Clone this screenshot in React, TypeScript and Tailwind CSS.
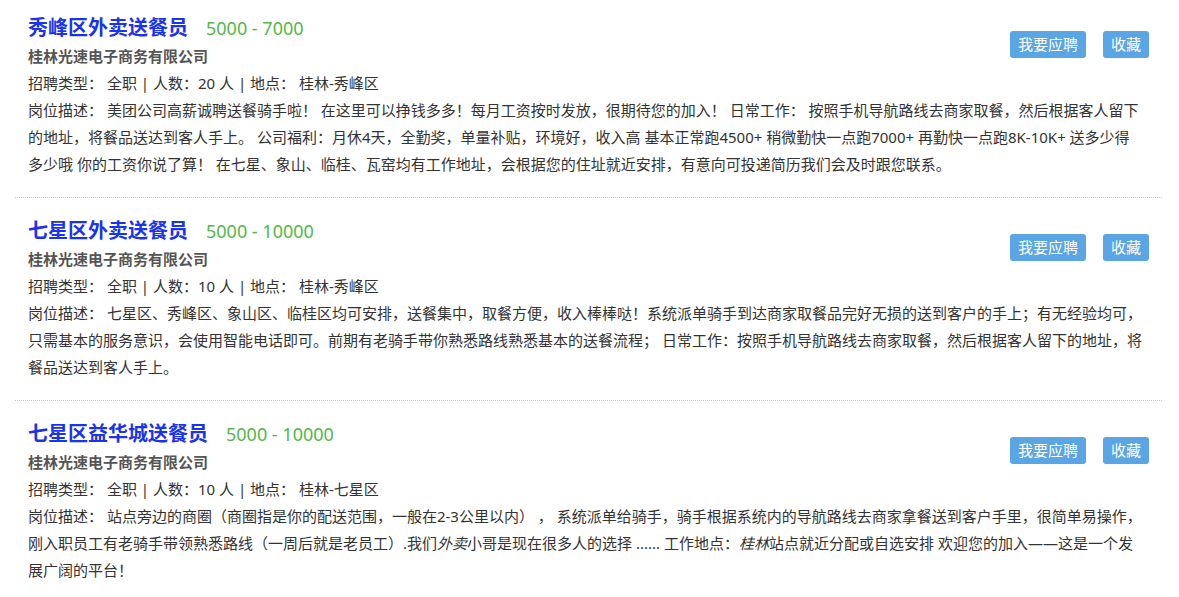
import React from "react";

const jobs = [
  {
    title: "秀峰区外卖送餐员",
    salary: "5000 - 7000",
    company: "桂林光速电子商务有限公司",
    count: "20",
    place: "桂林-秀峰区",
    desc: (
      <>
        美团公司高薪诚聘送餐骑手啦！ 在这里可以挣钱多多！每月工资按时发放，很期待您的加入！ 日常工作： 按照手机导航路线去商家取餐，然后根据客人留下的地址，将餐品送达到客人手上。 公司福利：月休4天，全勤奖，单量补贴，环境好，收入高 基本正常跑4500+ 稍微勤快一点跑7000+ 再勤快一点跑8K-10K+ 送多少得<span className="whitespace-nowrap">多少哦</span> 你的工资你说了算！ 在七星、象山、临桂、瓦窑均有工作地址，会根据您的住址就近安排，有意向可投递简历我们会及时跟您联系。
      </>
    ),
  },
  {
    title: "七星区外卖送餐员",
    salary: "5000 - 10000",
    company: "桂林光速电子商务有限公司",
    count: "10",
    place: "桂林-秀峰区",
    desc: (
      <>
        七星区、秀峰区、象山区、临桂区均可安排，送餐集中，取餐方便，收入棒棒哒！系统派单骑手到达商家取餐品完好无损的送到客户的手上；有无经验均可，只需基本的服务意识，会使用智能电话即可。前期有老骑手带你熟悉路线熟悉基本的送餐流程； 日常工作：按照手机导航路线去商家取餐，然后根据客人留下的地址，将餐品送达到客人手上。
      </>
    ),
  },
  {
    title: "七星区益华城送餐员",
    salary: "5000 - 10000",
    company: "桂林光速电子商务有限公司",
    count: "10",
    place: "桂林-七星区",
    desc: (
      <>
        站点旁边的商圈（商圈指是你的配送范围，一般在2-3公里以内） ， 系统派单给骑手，骑手根据系统内的导航路线去商家拿餐送到客户手里，很简单易操作，刚入职员工有老骑手带领熟悉路线（一周后就是老员工）.我们<i>外卖</i>小哥是现在很多人的选择 ...... 工作地点：<i>桂林</i>站点就近分配或自选安排 欢迎您的加入——这是一个发<span className="whitespace-nowrap">展广阔</span>的平台！
      </>
    ),
  },
];

const App = () => {
  return (
    <div
      className="bg-white min-h-[597px] text-[#333] text-[15px]"
      style={{ fontFamily: '"Noto Sans", "Noto Sans CJK SC", sans-serif' }}
    >
      <div className="mx-[15px] w-[1147px]">
        {jobs.map((job, i) => (
          <div
            key={i}
            className={`pl-[13px] pr-[13px] pb-[19px] border-b border-dotted border-[#c8c8c8] ${
              i === 0 ? "pt-[13px]" : "pt-[18px]"
            }`}
          >
            {/* header */}
            <div className="flex items-start justify-between">
              <div>
                <div className="flex items-baseline h-[30px] leading-[30px]">
                  <span className="text-[20px] font-bold text-[#1a33ee]">
                    {job.title}
                  </span>
                  <span className="ml-[18px] text-[18px] text-[#53b848]">
                    {job.salary}
                  </span>
                </div>
                <p className="leading-[27px] font-bold text-[#555]">
                  {job.company}
                </p>
                <p className="leading-[27px]">
                  招聘类型： 全职 | 人数：{job.count} 人 | 地点： {job.place}
                </p>
              </div>
              <div className="flex gap-[17px] mt-[18px]">
                <button className="h-[27px] px-2 rounded-[3px] bg-[#5aa5e3] text-white text-[15px] leading-[27px]">
                  我要应聘
                </button>
                <button className="h-[27px] px-2 rounded-[3px] bg-[#5aa5e3] text-white text-[15px] leading-[27px]">
                  收藏
                </button>
              </div>
            </div>

            {/* description */}
            <p className="leading-[27px]">岗位描述： {job.desc}</p>
          </div>
        ))}
      </div>
    </div>
  );
};

export default App;
